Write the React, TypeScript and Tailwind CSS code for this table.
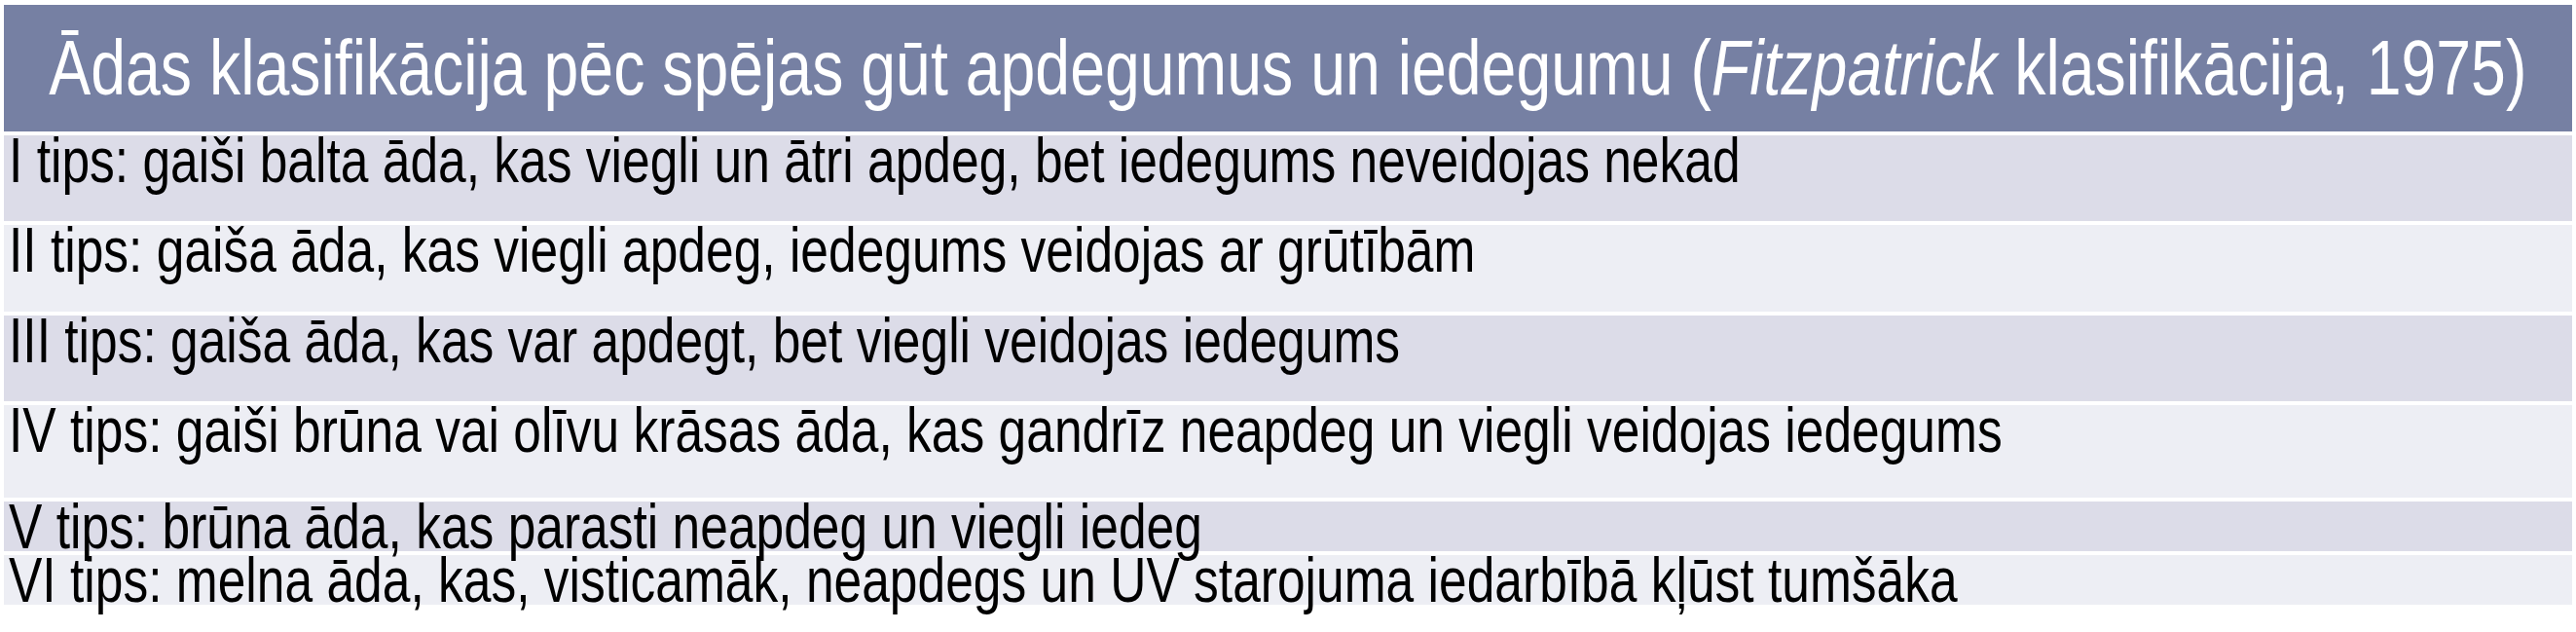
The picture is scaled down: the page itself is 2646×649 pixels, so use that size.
const rows = [
  { text: "I tips: gaiši balta āda, kas viegli un ātri apdeg, bet iedegums neveidojas nekad", h: "h-[88px]", bg: "bg-[#dcdce8]" },
  { text: "II tips: gaiša āda, kas viegli apdeg, iedegums veidojas ar grūtībām", h: "h-[89px]", bg: "bg-[#edeef4]" },
  { text: "III tips: gaiša āda, kas var apdegt, bet viegli veidojas iedegums", h: "h-[88px]", bg: "bg-[#dcdce8]" },
  { text: "IV tips: gaiši brūna vai olīvu krāsas āda, kas gandrīz neapdeg un viegli veidojas iedegums", h: "h-[95px]", bg: "bg-[#edeef4]" },
  { text: "V tips: brūna āda, kas parasti neapdeg un viegli iedeg", h: "h-[51px]", bg: "bg-[#dcdce8]" },
  { text: "VI tips: melna āda, kas, visticamāk, neapdegs un UV starojuma iedarbībā kļūst tumšāka", h: "h-[51px]", bg: "bg-[#edeef4]" },
];

export default function App() {
  return (
    <div className="w-[2646px] h-[649px] bg-white pt-[5px] pl-[4px] overflow-hidden font-['Liberation_Sans',Arial,sans-serif]">
      <div className="w-[2638px] flex flex-col gap-[4px]">
        {/* header */}
        <div className="h-[130px] bg-[#7680a3] flex items-center justify-center overflow-visible">
          <span className="inline-block shrink-0 whitespace-nowrap text-white text-[80px] leading-none origin-center scale-x-[0.805]">
            Ādas klasifikācija pēc spējas gūt apdegumus un iedegumu (<i>Fitzpatrick</i> klasifikācija, 1975)
          </span>
        </div>

        {rows.map((r) => (
          <div key={r.text} className={`${r.h} ${r.bg} pl-[5px]`}>
            <span className="inline-block whitespace-nowrap text-black text-[64px] leading-[53px] origin-left scale-x-[0.805]">
              {r.text}
            </span>
          </div>
        ))}
      </div>
    </div>
  );
}
